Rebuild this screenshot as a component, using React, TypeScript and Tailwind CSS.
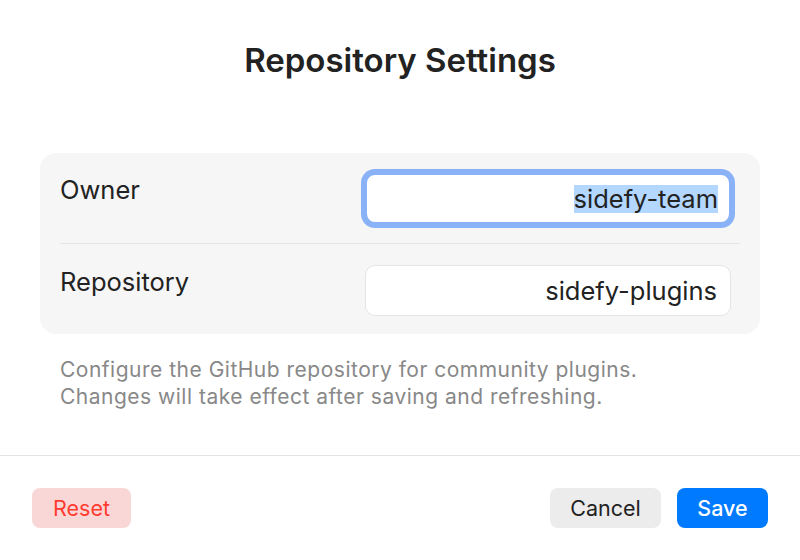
const fieldRows = [
  { label: "Owner", value: "sidefy-team", focused: true },
  { label: "Repository", value: "sidefy-plugins", focused: false },
];

const Field = ({ value, focused }: { value: string; focused: boolean }) => {
  if (focused) {
    return (
      <div className="mr-[9px] flex h-[51px] w-[366px] items-center justify-end rounded-[10px] border-2 border-[#8ab2f7] bg-white px-[11px] shadow-[0_0_0_4px_#8ab2f7]">
        <span className="inline-block h-[28px] bg-[#b3d7ff] text-[25.5px] leading-[28px] text-[#222]">{value}</span>
      </div>
    );
  }
  return (
    <div className="mr-[9px] flex h-[51px] w-[366px] items-center justify-end rounded-[10px] border border-[#e4e4e4] bg-white px-[13px]">
      <span className="text-[25.5px] leading-[28px] text-[#222]">{value}</span>
    </div>
  );
};

export default function App() {
  return (
    <div className="flex h-[560px] w-[800px] flex-col bg-white font-['Inter',sans-serif]">
      <h1 className="mt-[40px] text-center text-[33px] font-semibold leading-[40px] text-[#222]">
        Repository Settings
      </h1>

      <div className="mx-[40px] mt-[73px] rounded-[16px] bg-[#f6f6f6] px-5">
        {fieldRows.map((row, i) => (
          <div key={row.label}>
            {i > 0 && <div className="h-px bg-[#e4e4e4]" />}
            <div className={`flex items-start justify-between ${i === 0 ? "pt-5 pb-[19px]" : "pt-[21px] pb-[18px]"}`}>
              <span className="mt-[3px] text-[25.5px] leading-[28px] text-[#222]">{row.label}</span>
              <Field value={row.value} focused={row.focused} />
            </div>
          </div>
        ))}
      </div>

      <div className="mt-[22px] ml-[60px] text-[21px] leading-[27px] tracking-[0.5px] text-[#888]">
        <p>Configure the GitHub repository for community plugins.</p>
        <p>Changes will take effect after saving and refreshing.</p>
      </div>

      <div className="mt-[45px] h-px bg-[#e3e3e3]" />

      <div className="mt-[32px] flex items-center justify-between px-8">
        <button className="h-[40px] w-[99px] rounded-[8px] bg-[#fad7d7] text-[21.5px] text-[#ff3b30]">Reset</button>
        <div className="flex gap-4">
          <button className="h-[40px] w-[111px] rounded-[8px] bg-[#ececec] text-[21.5px] text-[#222]">Cancel</button>
          <button className="h-[40px] w-[91px] rounded-[8px] bg-[#007aff] text-[21.5px] font-medium text-white">Save</button>
        </div>
      </div>
    </div>
  );
}
